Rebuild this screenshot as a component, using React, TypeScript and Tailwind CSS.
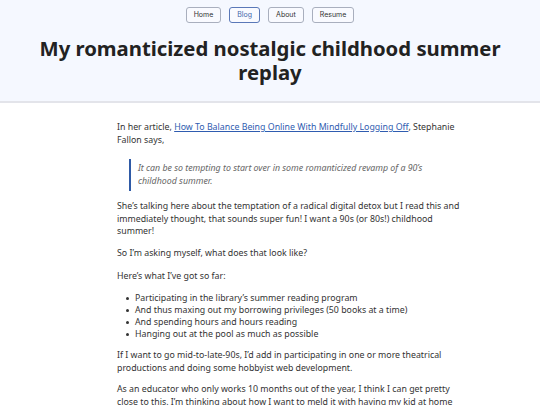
export default function App() {
  const items = [
    "Participating in the library’s summer reading program",
    "And thus maxing out my borrowing privileges (50 books at a time)",
    "And spending hours and hours reading",
    "Hanging out at the pool as much as possible",
  ];
  const nav = ["Home", "Blog", "About", "Resume"];

  return (
    <div className="min-h-screen bg-white text-[#333] font-['Noto_Sans',sans-serif]">
      {/* Header */}
      <header className="bg-[#f5f8ff] border-b-2 border-[#e3e4ea] pt-[7px] pb-[17px]">
        <nav className="flex justify-center gap-[8px]">
          {nav.map((n) => (
            <a
              key={n}
              href="#"
              className={
                "h-[16px] px-[7px] flex items-center rounded-[3px] border text-[7px] font-['Inter',sans-serif] bg-[#f9faff] " +
                (n === "Blog"
                  ? "border-[#5a78b8] text-[#4466aa]"
                  : "border-[#a9afbe] text-[#333]")
              }
            >
              {n}
            </a>
          ))}
        </nav>
        <h1 className="mt-[13px] text-center font-bold text-[20.3px] leading-[24px] text-[#222] px-6">
          My romanticized nostalgic childhood summer replay
        </h1>
      </header>

      {/* Article */}
      <main className="w-[352px] ml-[117px] pt-[18px] text-[8.8px] leading-[12.9px]">
        <p>
          In her article,{" "}
          <a href="#" className="text-[#2f5cb0] underline">
            How To Balance Being Online With Mindfully Logging Off
          </a>
          , Stephanie Fallon says,
        </p>

        <blockquote className="ml-[12px] mr-[24px] mt-[12px] mb-[9px] border-l-2 border-[#2f5aa6] pl-[7px] py-[3px] italic text-[#666]">
          <p>It can be so tempting to start over in some romanticized revamp of a 90’s childhood summer.</p>
        </blockquote>

        <p>
          She’s talking here about the temptation of a radical digital detox but I read this and
          immediately thought, that sounds super fun! I want a 90s (or 80s!) childhood summer!
        </p>
        <p className="mt-[8.5px]">So I’m asking myself, what does that look like?</p>
        <p className="mt-[10.5px]">Here’s what I’ve got so far:</p>

        <ul className="mt-[9px] leading-[12px]">
          {items.map((it) => (
            <li key={it} className="flex items-start">
              <span className="mt-[4.5px] ml-[9px] mr-[6px] w-[3px] h-[3px] shrink-0 rounded-full bg-[#333]" />
              <span>{it}</span>
            </li>
          ))}
        </ul>

        <p className="mt-[9px]">
          If I want to go mid-to-late-90s, I’d add in participating in one or more theatrical
          productions and doing some hobbyist web development.
        </p>
        <p className="mt-[8.5px]">
          As an educator who only works 10 months out of the year, I think I can get pretty close to
          this. I’m thinking about how I want to meld it with having my kid at home this summer.
        </p>
      </main>
    </div>
  );
}
